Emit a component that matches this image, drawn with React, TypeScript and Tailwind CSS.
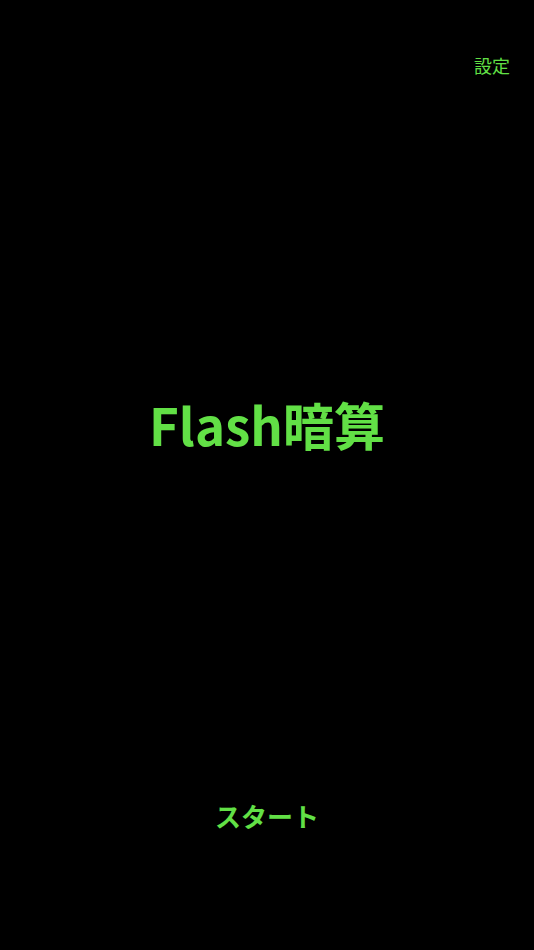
import React from 'react';

const App: React.FC = () => {
  return (
    <div
      className="h-[950px] w-full bg-black flex flex-col text-[#62e046]"
      style={{ fontFamily: '"Noto Sans CJK JP", "Noto Sans", sans-serif' }}
    >
      {/* Header */}
      <div className="flex justify-end pt-[52px] pr-[24px]">
        <button className="text-[18px] leading-[26px]">設定</button>
      </div>

      {/* Title */}
      <div className="flex justify-center mt-[316px]">
        <h1 className="text-[51px] leading-[60px] font-bold">Flash暗算</h1>
      </div>

      {/* Start */}
      <div className="flex justify-center mt-[344px]">
        <button className="text-[26px] leading-[36px] font-bold">スタート</button>
      </div>
    </div>
  );
};

export default App;
